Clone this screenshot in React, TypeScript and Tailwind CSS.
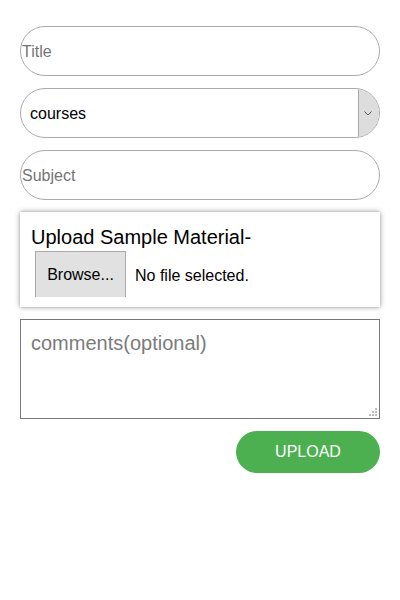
const field =
  "h-[50px] w-full rounded-full border border-[#aaa] bg-white px-[1px] pt-[1px] text-[16px] text-black outline-none placeholder:text-[#757575]"

const App = () => {
  return (
    <div className="min-h-[600px] bg-white font-['Liberation_Sans',Arial,sans-serif]">
      <form className="flex flex-col gap-[12px] px-5 pt-[26px]">
        <input className={field} placeholder="Title" />

        <div className="flex h-[50px] w-full overflow-hidden rounded-full border border-[#aaa] bg-white">
          <select className="flex-1 appearance-none bg-transparent pl-[9px] pt-[1px] text-[16px] text-black outline-none">
            <option>courses</option>
          </select>
          <div className="flex w-[21px] items-center justify-center border-l border-[#aaa] bg-[#dddddd] pr-[2px]">
            <svg width="8" height="5" viewBox="0 0 8 5" fill="none">
              <path d="M0.5 0.5 L4 4 L7.5 0.5" stroke="#555" strokeWidth="1" />
            </svg>
          </div>
        </div>

        <input className={field} placeholder="Subject" />

        <div className="flex h-[95px] flex-col bg-white px-[11px] pt-[12px] shadow-[0_0_5px_rgba(0,0,0,0.45)]">
          <div className="text-[20px] leading-[26px] text-black">Upload Sample Material-</div>
          <div className="flex items-end gap-[9px] pl-[4px]">
            <button
              type="button"
              className="mt-[1px] h-[46px] w-[91px] border border-b-0 border-[#aaa] bg-[#e1e1e1] text-[16px] text-black"
            >
              Browse...
            </button>
            <span className="pb-[9px] text-[16px] text-black">No file selected.</span>
          </div>
        </div>

        <div className="relative">
          <textarea
            className="block h-[100px] w-full resize-none border border-[#777] px-[10px] pt-[8px] pb-[6px] text-[20px] text-black outline-none placeholder:text-[#7b7b7b]"
            placeholder="comments(optional)"
          />
          <div className="pointer-events-none absolute right-[3px] bottom-[3px] grid grid-cols-3 gap-[1px]">
            <span className="h-[2px] w-[2px]" />
            <span className="h-[2px] w-[2px]" />
            <span className="h-[2px] w-[2px] bg-[#bbb]" />
            <span className="h-[2px] w-[2px]" />
            <span className="h-[2px] w-[2px] bg-[#bbb]" />
            <span className="h-[2px] w-[2px] bg-[#bbb]" />
            <span className="h-[2px] w-[2px] bg-[#bbb]" />
            <span className="h-[2px] w-[2px] bg-[#bbb]" />
            <span className="h-[2px] w-[2px] bg-[#bbb]" />
          </div>
        </div>

        <div className="flex justify-end">
          <button
            type="button"
            className="h-[42px] w-[144px] rounded-full bg-[#4caf50] text-[16px] text-white"
          >
            UPLOAD
          </button>
        </div>
      </form>
    </div>
  )
}

export default App
